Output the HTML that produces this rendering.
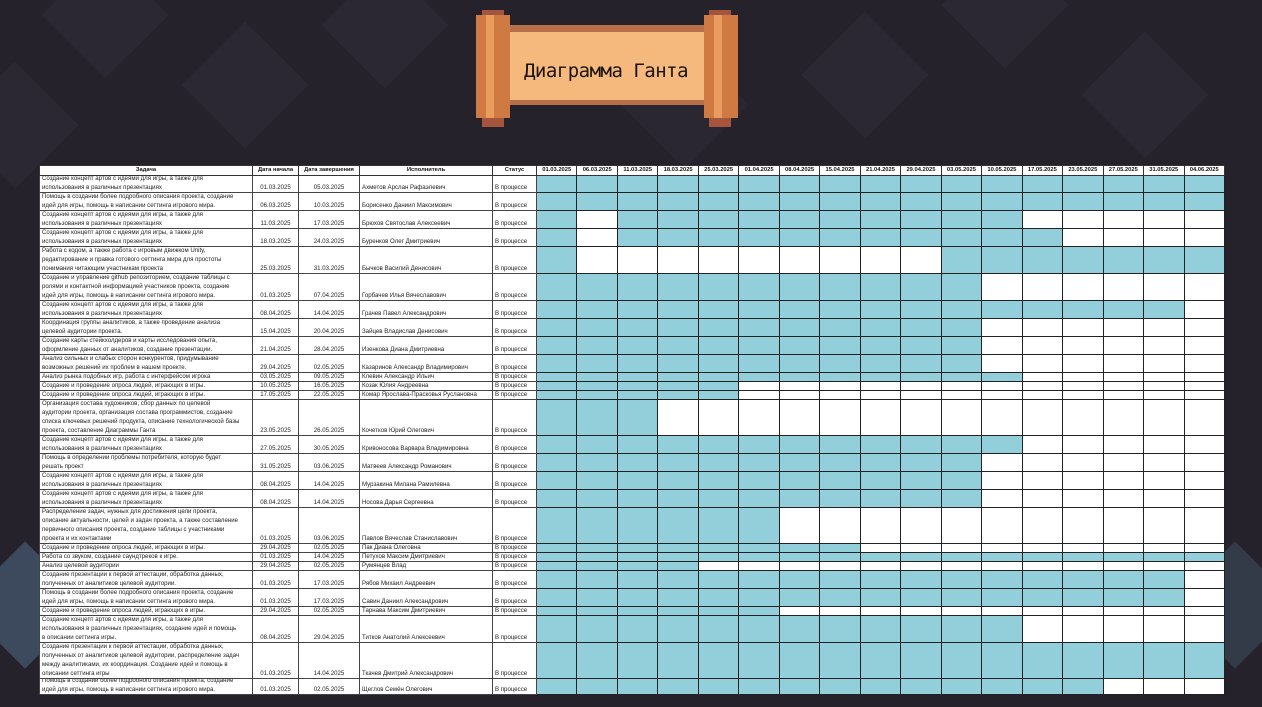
<!DOCTYPE html>
<html><head><meta charset="utf-8"><style>
body{margin:0;width:1262px;height:707px;overflow:hidden;background:#25222c;position:relative;font-family:"Liberation Sans","Noto Sans CJK SC",sans-serif}
.bg{position:absolute;inset:0;overflow:hidden}
.d{position:absolute;width:90px;height:90px;background:#2b2833;transform:rotate(45deg)}
table{position:absolute;left:39px;top:165px;width:1185px;border-collapse:collapse;table-layout:fixed;background:#fff}
td{border:1px solid #444;padding:0;font-size:6.1px;color:#222;vertical-align:bottom;overflow:hidden}
td>div{overflow:hidden;display:flex;flex-direction:column;justify-content:flex-end;padding:0 2px;line-height:9px}
td.t>div{padding-right:12px}
td.g{border-color:#222}
td.b{background:#93cedb}
th{border:1px solid #333;font-size:5.8px;height:9px;line-height:9px;padding:0;font-weight:bold;color:#111;overflow:hidden;white-space:nowrap}
.c{text-align:center}
.scroll{position:absolute}
</style></head><body>
<div class="bg">
<div class="d" style="left:60px;top:-30px"></div><div class="d" style="left:200px;top:40px"></div>
<div class="d" style="left:340px;top:-20px"></div><div class="d" style="left:820px;top:30px"></div>
<div class="d" style="left:960px;top:-40px"></div><div class="d" style="left:1100px;top:50px"></div>
<div class="d" style="left:-30px;top:80px"></div><div class="d" style="left:640px;top:60px;background:#2a2733"></div>
<div class="d" style="left:-20px;top:560px;background:#3d4a5e"></div>
<div class="d" style="left:1190px;top:560px;background:#333a48"></div>
</div>
<div class="scroll" style="left:506px;top:25px;width:200px;height:80px;background:#b8704a"></div>
<div class="scroll" style="left:506px;top:32px;width:200px;height:68px;background:#f5b97d"></div>
<div class="scroll" style="left:482px;top:10px;width:22px;height:117px;background:#a4553e"></div>
<div class="scroll" style="left:476px;top:15px;width:34px;height:103px;background:#cf7a42"></div>
<div class="scroll" style="left:486px;top:15px;width:8px;height:103px;background:#e99c5e"></div>
<div class="scroll" style="left:709px;top:10px;width:22px;height:117px;background:#a4553e"></div>
<div class="scroll" style="left:704px;top:15px;width:34px;height:103px;background:#cf7a42"></div>
<div class="scroll" style="left:714px;top:15px;width:8px;height:103px;background:#e99c5e"></div>
<div class="scroll" style="left:506px;top:56px;width:200px;text-align:center;font-family:'DejaVu Sans Mono','Liberation Mono',monospace;font-size:19px;color:#1a1410;line-height:30px;letter-spacing:-0.5px">Диаграмма Ганта</div>

<table>
<colgroup><col style="width:213px"><col style="width:46px"><col style="width:61px"><col style="width:133px"><col style="width:44px">
<col span="17" style="width:40.47px"></colgroup>
<tr><th>Задача</th><th>Дата начала</th><th>Дата завершения</th><th>Исполнитель</th><th>Статус</th>
<th>01.03.2025</th><th>06.03.2025</th><th>11.03.2025</th><th>18.03.2025</th><th>25.03.2025</th><th>01.04.2025</th><th>08.04.2025</th><th>15.04.2025</th><th>21.04.2025</th><th>29.04.2025</th><th>03.05.2025</th><th>10.05.2025</th><th>17.05.2025</th><th>23.05.2025</th><th>27.05.2025</th><th>31.05.2025</th><th>04.06.2025</th></tr>
<tbody id="tb"></tbody>
</table>
<script>
var R=[
[17,"Создание концепт артов с идеями для игры, а также для использования в различных презентациях","01.03.2025","05.03.2025","Ахметов Арслан Рафаэлевич","A"],
[18,"Помощь в создании более подробного описания проекта, создание идей для игры, помощь в написании сеттинга игрового мира.","06.03.2025","10.03.2025","Борисенко Даниил Максимович","A"],
[18,"Создание концепт артов с идеями для игры, а также для использования в различных презентациях","11.03.2025","17.03.2025","Брюхов Святослав Алексеевич","10111111111100000"],
[18,"Создание концепт артов с идеями для игры, а также для использования в различных презентациях","18.03.2025","24.03.2025","Буренков Олег Дмитриевич","10111111111110000"],
[27,"Работа с кодом, а также работа с игровым движком Unity, редактирование и правка готового сеттинга мира для простоты понимания читающим участникам проекта","25.03.2025","31.03.2025","Бычков Василий Денисович","10000000001111111"],
[27,"Создание и управление github репозиторием, создание таблицы с ролями и контактной информацией участников проекта, создание идей для игры, помощь в написании сеттинга игрового мира.","01.03.2025","07.04.2025","Горбачев Илья Вячеславович",11],
[18,"Создание концепт артов с идеями для игры, а также для использования в различных презентациях","08.04.2025","14.04.2025","Грачев Павел Александрович",16],
[18,"Координация группы аналитиков, а также проведение анализа целевой аудитории проекта.","15.04.2025","20.04.2025","Зайцев Владислав Денисович",11],
[18,"Создание карты стейкхолдеров и карты исследования опыта, оформление данных от аналитиков, создание презентации.","21.04.2025","28.04.2025","Изенкова Диана Дмитриевна",11],
[18,"Анализ сильных и слабых сторон конкурентов, придумывание возможных решений их проблем в нашем проекте.","29.04.2025","02.05.2025","Казаринов Александр Владимирович",11],
[9,"Анализ рынка подобных игр, работа с интерфейсом игрока","03.05.2025","09.05.2025","Клевин Александр Ильич",12],
[9,"Создание и проведение опроса людей, играющих в игры.","10.05.2025","16.05.2025","Козак Юлия Андреевна",5],
[9,"Создание и проведение опроса людей, играющих в игры.","17.05.2025","22.05.2025","Комар Ярослава-Прасковья Руслановна",5],
[36,"Организация состава художников, сбор данных по целевой аудитории проекта, организация состава программистов, создание списка ключевых решений продукта, описание технологической базы проекта, составление Диаграммы Ганта","23.05.2025","26.05.2025","Кочетков Юрий Олегович",3],
[18,"Создание концепт артов с идеями для игры, а также для использования в различных презентациях","27.05.2025","30.05.2025","Кривоносова Варвара Владимировна",12],
[18,"Помощь в определении проблемы потребителя, которую будет решать проект","31.05.2025","03.06.2025","Матвеев Александр Романович",11],
[18,"Создание концепт артов с идеями для игры, а также для использования в различных презентациях","08.04.2025","14.04.2025","Мурзакина Милана Рамилевна",11],
[18,"Создание концепт артов с идеями для игры, а также для использования в различных презентациях","08.04.2025","14.04.2025","Носова Дарья Сергеевна",11],
[36,"Распределение задач, нужных для достижения цели проекта, описание актуальности, целей и задач проекта, а также составление первичного описания проекта, создание таблицы с участниками проекта и их контактами","01.03.2025","03.06.2025","Павлов Вячеслав Станиславович",6],
[9,"Создание и проведение опроса людей, играющих в игры.","29.04.2025","02.05.2025","Пак Диана Олеговна",8],
[9,"Работа со звуком, создание саундтреков к игре.","01.03.2025","14.04.2025","Петухов Максим Дмитриевич",17],
[9,"Анализ целевой аудитории","29.04.2025","02.05.2025","Румянцев Влад",4],
[18,"Создание презентации к первой аттестации, обработка данных, полученных от аналитиков целевой аудитории.","01.03.2025","17.03.2025","Рябов Михаил Андреевич",16],
[18,"Помощь в создании более подробного описания проекта, создание идей для игры, помощь в написании сеттинга игрового мира.","01.03.2025","17.03.2025","Савин Даниил Александрович",16],
[9,"Создание и проведение опроса людей, играющих в игры.","29.04.2025","02.05.2025","Тарнава Максим Дмитриевич",6],
[27,"Создание концепт артов с идеями для игры, а также для использования в различных презентациях, создание идей и помощь в описании сеттинга игры.","08.04.2025","29.04.2025","Титков Анатолий Алексеевич",12],
[36,"Создание презентации к первой аттестации, обработка данных, полученных от аналитиков целевой аудитории, распределение задач между аналитиками, их координация. Создание идей и помощь в описании сеттинга игры","01.03.2025","14.04.2025","Ткачев Дмитрий Александрович",17],
[16,"Помощь в создании более подробного описания проекта, создание идей для игры, помощь в написании сеттинга игрового мира.","01.03.2025","02.05.2025","Щеглов Семён Олегович",14]];
var h="";
R.forEach(function(r){
 var p=r[5];if(p==="A")p=17;
 if(typeof p==="number"){var s="";for(var i=0;i<17;i++)s+=i<p?"1":"0";p=s;}
 var H=r[0]-1;
 function c(t,cl){return '<td'+(cl?' class="'+cl+'"':'')+'><div style="height:'+H+'px">'+t+'</div></td>';}
 h+='<tr>'+c('<span>'+r[1]+'</span>','t')+c(r[2],'c')+c(r[3],'c')+c(r[4])+c('В процессе');
 for(var i=0;i<17;i++)h+='<td class="g'+(p[i]=="1"?" b":"")+'"><div style="height:'+H+'px"></div></td>';
 h+='</tr>';
});
document.getElementById("tb").innerHTML=h;
</script>
</body></html>
